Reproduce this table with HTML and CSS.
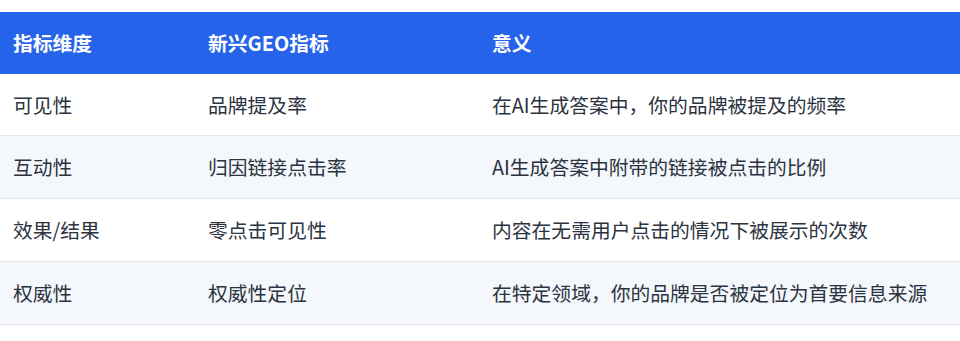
FILE: index.html
```html
<!DOCTYPE html>
<html lang="zh">
<head>
<meta charset="utf-8">
<link rel="stylesheet" href="styles.css">
</head>
<body>
<table class="geo-table">
  <colgroup>
    <col class="c1"><col class="c2"><col class="c3">
  </colgroup>
  <thead>
    <tr><th>指标维度</th><th>新兴GEO指标</th><th>意义</th></tr>
  </thead>
  <tbody>
    <tr><td>可见性</td><td>品牌提及率</td><td>在AI生成答案中，你的品牌被提及的频率</td></tr>
    <tr class="alt"><td>互动性</td><td>归因链接点击率</td><td>AI生成答案中附带的链接被点击的比例</td></tr>
    <tr><td>效果/结果</td><td>零点击可见性</td><td>内容在无需用户点击的情况下被展示的次数</td></tr>
    <tr class="alt"><td>权威性</td><td>权威性定位</td><td>在特定领域，你的品牌是否被定位为首要信息来源</td></tr>
  </tbody>
</table>
</body>
</html>
```
FILE: styles.css
```css
html, body {
  margin: 0;
  padding: 0;
  background: #ffffff;
}
body {
  padding-top: 12px;
  font-family: "Noto Sans CJK SC", "Noto Sans", sans-serif;
}
.geo-table {
  width: 960px;
  border-collapse: collapse;
  table-layout: fixed;
  font-size: 19.8px;
  color: #2b3340;
}
.c1 { width: 195px; }
.c2 { width: 284px; }
.c3 { width: 481px; }
.geo-table th {
  background: #2563eb;
  color: #ffffff;
  font-weight: 700;
  text-align: left;
  padding: 16px 13px;
  line-height: 29.7px;
}
.geo-table td {
  padding: 16px 13px;
  line-height: 29.7px;
  border-bottom: 1px solid #e3e7ec;
  white-space: nowrap;
}
.geo-table tr.alt td {
  background: #f4f7fb;
}
```
